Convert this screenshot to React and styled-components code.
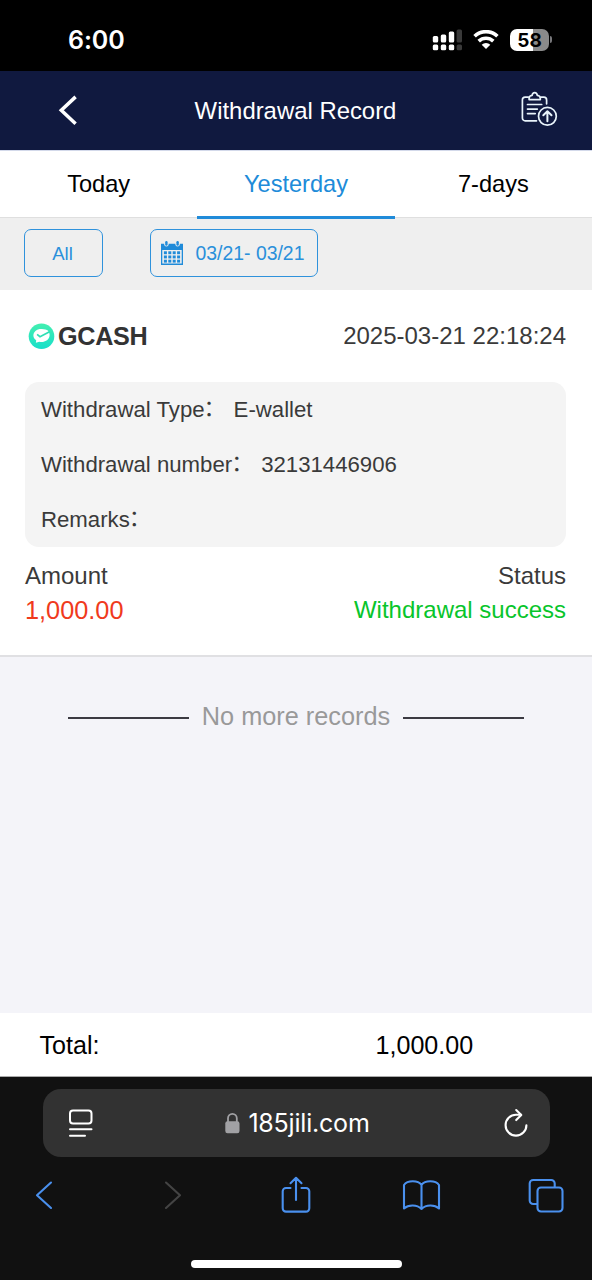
import React from "react";
import styled, { createGlobalStyle } from "styled-components";

const GlobalStyle = createGlobalStyle`
  * { box-sizing: border-box; }
  body { margin: 0; background: #f4f4f9; }
  svg { display: block; flex: none; }
`;

const sans = `"Liberation Sans", "Noto Sans CJK SC", sans-serif`;
const system = `Inter, "Liberation Sans", sans-serif`;

const Screen = styled.div`
  width: 592px;
  height: 1280px;
  display: flex;
  flex-direction: column;
  overflow: hidden;
  background: #f4f4f9;
  font-family: ${sans};
  white-space: nowrap;
`;

const StatusBar = styled.div`
  height: 71px;
  flex: none;
  display: flex;
  align-items: center;
  justify-content: space-between;
  padding: 8px 40px 0 68px;
  background: #000;
  color: #fff;
`;

const Clock = styled.span`
  font: 600 25px/30px ${system};
  letter-spacing: -0.1px;
`;

const StatusIcons = styled.div`
  display: flex;
  align-items: center;
  gap: 11px;
`;

const Battery = styled.div`
  display: flex;
  align-items: center;
  gap: 1px;
`;

const BatteryBody = styled.div`
  width: 39px;
  height: 22px;
  border-radius: 7px;
  background: linear-gradient(90deg, #fff 58%, #8a8a8a 58%);
  color: #000;
  text-align: center;
  font: 700 19px/23px ${system};
`;

const BatteryTip = styled.div`
  width: 2px;
  height: 7px;
  border-radius: 0 2px 2px 0;
  background: #77777a;
`;

const Header = styled.header`
  height: 79px;
  flex: none;
  display: flex;
  align-items: center;
  justify-content: space-between;
  padding: 0 34px 0 58px;
  background: #10193f;
  color: #fff;
`;

const Title = styled.h1`
  margin: 0 0 0 -8px;
  padding-top: 1px;
  font-size: 23.9px;
  font-weight: 400;
  line-height: 30px;
`;

const Tabs = styled.nav`
  height: 68px;
  flex: none;
  display: grid;
  grid-template-columns: repeat(3, 1fr);
  border-top: 1px solid #d3d9ea;
  background: linear-gradient(#fff 66px, #dfdfdf 66px);
`;

const Tab = styled.div`
  height: 68px;
  padding-top: 1px;
  border-bottom: 3px solid ${(p) => (p.$active ? "#208bd9" : "transparent")};
  color: ${(p) => (p.$active ? "#208bd9" : "#000")};
  font-size: 23.6px;
  line-height: 64px;
  text-align: center;
  position: relative;
`;

const Filters = styled.div`
  height: 72px;
  flex: none;
  display: flex;
  align-items: flex-start;
  gap: 47px;
  padding: 11px 24px 0;
  background: #efefef;
`;

const FilterButton = styled.div`
  width: ${(p) => p.$width}px;
  height: 48px;
  display: flex;
  align-items: center;
  justify-content: center;
  gap: 13px;
  padding: ${(p) => p.$padding};
  border: 1.5px solid #2f92dc;
  border-radius: 7px;
  color: #2a90db;
  font-size: ${(p) => p.$size}px;
  line-height: 24px;
`;

const Record = styled.article`
  height: 367px;
  flex: none;
  padding: 26px 26px 0 25px;
  border-bottom: 2px solid #e0e0e3;
  background: #fff;
  color: #3a3a3a;
`;

const RecordHead = styled.div`
  display: flex;
  align-items: center;
  justify-content: space-between;
  height: 40px;
  font-size: 24px;
`;

const Provider = styled.div`
  display: flex;
  align-items: center;
  gap: 3px;
  padding-left: 3px;
  color: #333;
  font-size: 25.2px;
  font-weight: 700;
  letter-spacing: -0.3px;
`;

const Details = styled.div`
  height: 165px;
  margin-top: 26px;
  padding-left: 16px;
  border-radius: 14px;
  background: #f4f4f4;
`;

const DetailRow = styled.div`
  display: flex;
  height: 55px;
  font-size: 22.2px;
  line-height: 55px;
`;

const Colon = styled.span`
  width: 29px;
  font-family: "Noto Sans CJK SC", sans-serif;
  line-height: 49px;
  text-indent: -1px;
`;

const Summary = styled.div`
  display: flex;
  justify-content: space-between;
  margin-top: 12px;
`;

const SummaryColumn = styled.div`
  display: flex;
  flex-direction: column;
  text-align: ${(p) => p.$align};
  font-size: 24px;
  line-height: 34px;
`;

const Amount = styled.span`
  color: #f03a1c;
  font-size: 25.3px;
  line-height: 35px;
`;

const Success = styled.span`
  color: #08c52b;
`;

const EndNote = styled.div`
  flex: 1;
  display: flex;
  align-items: flex-start;
  justify-content: center;
  gap: 13px;
  padding-top: 44px;
  color: #999;
  font-size: 25.3px;
  line-height: 30px;
`;

const Rule = styled.span`
  width: 121px;
  height: 2px;
  margin-top: 16px;
  background: #3b3a42;
`;

const TotalBar = styled.div`
  height: 64px;
  flex: none;
  display: grid;
  grid-template-columns: 336px 1fr;
  padding-left: 39.5px;
  background: #fff;
  border-bottom: 1px solid #aaa;
  color: #000;
  font-size: 25.1px;
  line-height: 64px;
`;

const Browser = styled.footer`
  height: 203px;
  flex: none;
  display: flex;
  flex-direction: column;
  align-items: center;
  padding-top: 12px;
  background: #111;
`;

const AddressBar = styled.div`
  width: 507px;
  height: 68px;
  display: flex;
  align-items: center;
  justify-content: space-between;
  padding: 0 21px 0 25px;
  border-radius: 18px;
  background: #323232;
  color: #fff;
`;

const Address = styled.div`
  display: flex;
  align-items: center;
  gap: 8px;
  margin-left: -3px;
  font: 400 25px/30px ${system};
  letter-spacing: -0.2px;
`;

const Toolbar = styled.div`
  align-self: stretch;
  display: flex;
  justify-content: space-between;
  padding: 18px 26px 0 24px;
  color: #4a90ee;
`;

const HomeIndicator = styled.div`
  width: 211px;
  height: 8px;
  margin-top: 43px;
  border-radius: 4px;
  background: #fff;
`;

const Signal = () => (
  <svg width="30" height="22" viewBox="0 0 30 22" fill="#fff">
    <rect x="0.8" y="7" width="5.4" height="6.5" rx="1.5" />
    <rect x="8.8" y="5.5" width="5.4" height="8" rx="1.5" />
    <rect x="16.8" y="2.5" width="5.4" height="11" rx="1.5" />
    <rect x="24.6" y="0.5" width="5.4" height="13" rx="1.5" fill="#3a3a3a" />
    <rect x="0.8" y="15.5" width="5.4" height="5.8" rx="1.5" />
    <rect x="8.8" y="15.5" width="5.4" height="5.8" rx="1.5" />
    <rect x="16.8" y="15.5" width="5.4" height="5.8" rx="1.5" />
    <rect x="24.6" y="15.5" width="5.4" height="5.8" rx="1.5" fill="#3a3a3a" />
  </svg>
);

const Wifi = () => (
  <svg width="26" height="20" viewBox="0 0 26 20" fill="none" stroke="#fff" strokeWidth="3.6">
    <path d="M1.6 6.3a16.3 16.3 0 0 1 22.8 0" />
    <path d="M5.7 11.1a10.6 10.6 0 0 1 14.6 0" />
    <path d="M13 19l-4.3-4.2a6.200 6.200 0 0 1 8.600 0z" fill="#fff" stroke="none" />
  </svg>
);

const Back = () => (
  <svg width="20" height="32" viewBox="0 0 20 32" fill="none" stroke="#fff" strokeWidth="3.5">
    <path d="M17.600 1.900L3.300 15.300 17.600 28.700" />
  </svg>
);

const ClipboardUp = () => (
  <svg width="37" height="39" viewBox="0 0 37 39" fill="none" stroke="#e9f4fb" strokeWidth="1.7" strokeLinecap="round" strokeLinejoin="round">
    <path d="M7.3 6.1H4.2a2.8 2.8 0 0 0-2.800 2.800V27a2.800 2.800 0 0 0 2.800 2.800h11.300M20 6.100h2.800a2.800 2.800 0 0 1 2.800 2.800v3.900" />
    <path d="M8.100 8.600V7.200c0-1.900 1.300-2.600 3-2.800.2-1.700 1.200-2.800 2.600-2.800s2.400 1.100 2.600 2.800c1.700.2 3 .9 3 2.800v1.400z" />
    <path d="M6.500 13.500h14.200M6.500 18.100h9.800M6.500 22.600h7.700" />
    <circle cx="26.400" cy="25.300" r="8.900" />
    <path d="M26.400 30.300v-9.700M22.300 24.300l4.100-4 4.100 4" strokeWidth="2" />
  </svg>
);

const dots = [0, 1, 2, 3].flatMap((c) => [0, 1, 2].map((r) => [c, r]));

const Calendar = () => (
  <svg width="22" height="24" viewBox="0 0 22 24" fill="#208bd9">
    <path fillRule="evenodd" d="M0 2.800h22V24H0zM1.300 9v13.600h19.400V9z" />
    <rect x="3.200" y="-.5" width="4.400" height="6" rx="2.200" fill="#efefef" />
    <rect x="14.400" y="-.5" width="4.400" height="6" rx="2.200" fill="#efefef" />
    <rect x="4.200" y="0" width="2.400" height="4.800" rx="1.200" />
    <rect x="15.400" y="0" width="2.400" height="4.800" rx="1.200" />
    {dots.map(([c, r]) => (
      <rect key={`${c}-${r}`} x={2.9 + c * 4.4} y={10.3 + r * 4.2} width="3" height="2.900" />
    ))}
  </svg>
);

const GCashLogo = () => (
  <svg width="27" height="27" viewBox="0 0 27 27">
    <defs>
      <linearGradient id="mint" x1="0" y1="0" x2="0" y2="1">
        <stop offset="0" stopColor="#43efb0" />
        <stop offset="1" stopColor="#18dfca" />
      </linearGradient>
    </defs>
    <circle cx="13.500" cy="13.300" r="12.800" fill="url(#mint)" />
    <path d="M7.900 19.800l.3-2.600C3.600 14.600 4.600 7.400 11.600 6.100c3.400-.6 6.700.2 8.500 1.700 3.400 4.500.8 9.800-4.400 11-1.700.4-3.100.3-4.400 0z" fill="#fff" />
    <path d="M9.100 11.300l2.900 2.400 9.500-5" fill="none" stroke="#30dfb5" strokeWidth="1.700" />
  </svg>
);

const PageMenu = () => (
  <svg width="26" height="30" viewBox="0 0 26 30" fill="none" stroke="#fff" strokeWidth="2" strokeLinecap="round">
    <rect x="2" y="2.500" width="21.500" height="13" rx="3" />
    <path d="M2 21.300h21.500M2 27.800h15" />
  </svg>
);

const Lock = () => (
  <svg width="15" height="21" viewBox="0 0 15 21" fill="none">
    <rect x=".3" y="8.200" width="14.200" height="12" rx="2.200" fill="#a1a1a4" />
    <path d="M3 10V5.300a4.400 4.400 0 0 1 8.800 0V10" stroke="#a1a1a4" strokeWidth="1.800" />
  </svg>
);

const Reload = () => (
  <svg width="24" height="31" viewBox="0 0 24 31" fill="none" stroke="#fff" strokeWidth="2.100" strokeLinecap="round" strokeLinejoin="round">
    <path d="M22.400 17.200A10.400 10.400 0 1 1 12 6.800h5" />
    <path d="M12.200 2l5.100 4.900-5.100 5.200" />
  </svg>
);

const ToolIcon = ({ children, color = "currentColor" }) => (
  <svg width="40" height="42" viewBox="0 0 40 42" fill="none" stroke={color} strokeWidth="2.100" strokeLinecap="round" strokeLinejoin="round">
    {children}
  </svg>
);

const details = [
  ["Withdrawal Type", "E-wallet"],
  ["Withdrawal number", "32131446906"],
  ["Remarks", ""],
];

export default function App() {
  return (
    <Screen>
      <GlobalStyle />
      <StatusBar>
        <Clock>6:00</Clock>
        <StatusIcons>
          <Signal />
          <Wifi />
          <Battery>
            <BatteryBody>58</BatteryBody>
            <BatteryTip />
          </Battery>
        </StatusIcons>
      </StatusBar>
      <Header>
        <Back />
        <Title>Withdrawal Record</Title>
        <ClipboardUp />
      </Header>
      <Tabs>
        <Tab>Today</Tab>
        <Tab $active>Yesterday</Tab>
        <Tab>7-days</Tab>
      </Tabs>
      <Filters>
        <FilterButton $width={79} $size={18.6} $padding="2px 2px 0 0">All</FilterButton>
        <FilterButton $width={168} $size={19.4} $padding="0 3px 0 0">
          <Calendar />
          03/21- 03/21
        </FilterButton>
      </Filters>
      <Record>
        <RecordHead>
          <Provider>
            <GCashLogo />
            GCASH
          </Provider>
          <span>2025-03-21 22:18:24</span>
        </RecordHead>
        <Details>
          {details.map(([label, value]) => (
            <DetailRow key={label}>
              <span>{label}</span>
              <Colon>：</Colon>
              <span>{value}</span>
            </DetailRow>
          ))}
        </Details>
        <Summary>
          <SummaryColumn $align="left">
            <span>Amount</span>
            <Amount>1,000.00</Amount>
          </SummaryColumn>
          <SummaryColumn $align="right">
            <span>Status</span>
            <Success>Withdrawal success</Success>
          </SummaryColumn>
        </Summary>
      </Record>
      <EndNote>
        <Rule />
        No more records
        <Rule />
      </EndNote>
      <TotalBar>
        <span>Total:</span>
        <span>1,000.00</span>
      </TotalBar>
      <Browser>
        <AddressBar>
          <PageMenu />
          <Address>
            <Lock />
            185jili.com
          </Address>
          <Reload />
        </AddressBar>
        <Toolbar>
          <ToolIcon>
            <path d="M27 7.500L13 20.300 27 33" />
          </ToolIcon>
          <ToolIcon color="#444">
            <path d="M16 7.500l14 12.800L16 33" />
          </ToolIcon>
          <ToolIcon>
            <path d="M15.500 13H11a3.300 3.300 0 0 0-3.300 3.300v17a3.300 3.300 0 0 0 3.300 3.300h20a3.300 3.300 0 0 0 3.300-3.300v-17a3.300 3.300 0 0 0-3.300-3.300h-4.500M21 25V3M15.500 8.200L21 2.800 26.500 8.200" />
          </ToolIcon>
          <ToolIcon>
            <path d="M20.500 10C17 5 6.500 5 3 10v23.500c4.500-4 13-4 17.500.5C25 29.500 33.500 29.500 38 33.500V10C34.500 5 24 5 20.500 10zM20.500 10v24" />
          </ToolIcon>
          <ToolIcon>
            <rect x="11.500" y="12.500" width="25" height="24" rx="3.500" />
            <path d="M11 29H7.200A3.500 3.500 0 0 1 3.700 25.500V8.500A3.500 3.500 0 0 1 7.200 5h18a3.500 3.500 0 0 1 3.500 3.500v3.500" />
          </ToolIcon>
        </Toolbar>
        <HomeIndicator />
      </Browser>
    </Screen>
  );
}
